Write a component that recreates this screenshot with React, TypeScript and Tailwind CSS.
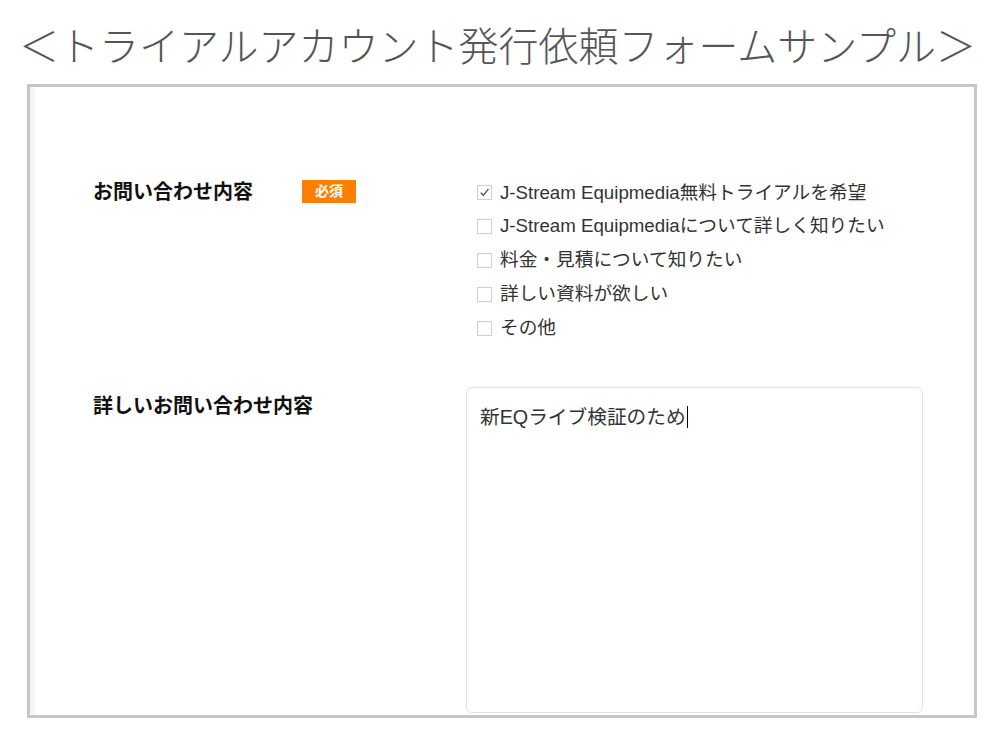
import React from 'react';

const jp = { fontFamily: '"Liberation Sans", "Noto Sans CJK JP", sans-serif' };

const options = [
  { label: 'J-Stream Equipmedia無料トライアルを希望', checked: true },
  { label: 'J-Stream Equipmediaについて詳しく知りたい', checked: false },
  { label: '料金・見積について知りたい', checked: false },
  { label: '詳しい資料が欲しい', checked: false },
  { label: 'その他', checked: false },
];

function Box({ checked }: { checked: boolean }) {
  return (
    <span className="flex h-[15px] w-[15px] shrink-0 items-center justify-center border border-[#cfcfcf] bg-white">
      {checked && (
        <svg width="11" height="11" viewBox="0 0 11 11" fill="none">
          <path d="M1.8 5.6 L4.3 8.3 L9.4 2.2" stroke="#4a4a4a" strokeWidth="1.3" />
        </svg>
      )}
    </span>
  );
}

export default function App() {
  return (
    <div className="h-[745px] w-[1005px] overflow-hidden bg-white" style={jp}>
      <div
        className="flex h-[84px] items-center justify-center pt-[4px] pr-[10px] text-[40px] font-light leading-none text-[#555]"
        style={{ fontFamily: '"Noto Sans CJK JP", sans-serif' }}
      >
        ＜トライアルアカウント発行依頼フォームサンプル＞
      </div>

      <div className="ml-[27px] flex h-[634px] w-[950px] border-[3px] border-[#c6c6c6] bg-white">
        <div className="w-[5px] shrink-0 bg-[#f6f6f6]" />
        <div className="flex-1 pt-[88px]">
          <div className="flex">
            <div className="flex w-[431px] shrink-0 items-start pl-[58px] pt-[5px]">
              <span className="w-[209px] text-[20px] font-bold leading-[24px] text-[#111]">お問い合わせ内容</span>
              <span className="flex h-[23px] w-[54px] items-center justify-center bg-[#ff7f00] text-[14px] font-bold text-white">
                必須
              </span>
            </div>
            <div className="flex flex-col pl-[11px] pt-[1px]">
              {options.map((o) => (
                <div key={o.label} className="flex h-[33.8px] items-center gap-[8px] text-[18.7px] text-[#333]">
                  <Box checked={o.checked} />
                  <span className="leading-none">{o.label}</span>
                </div>
              ))}
            </div>
          </div>

          <div className="mt-[42px] flex">
            <div className="w-[431px] shrink-0 pl-[58px] pt-[7px] text-[20px] font-bold leading-[24px] text-[#111]">
              詳しいお問い合わせ内容
            </div>
            <div className="h-[326px] w-[457px] rounded-[6px] border border-[#e2e2e2] bg-white px-[13px] pt-[14px] text-[19.7px] leading-[26px] text-[#333]">
              新EQライブ検証のため
              <span className="ml-[1px] inline-block h-[22px] w-[1px] translate-y-[4px] bg-black" />
            </div>
          </div>
        </div>
      </div>
    </div>
  );
}
